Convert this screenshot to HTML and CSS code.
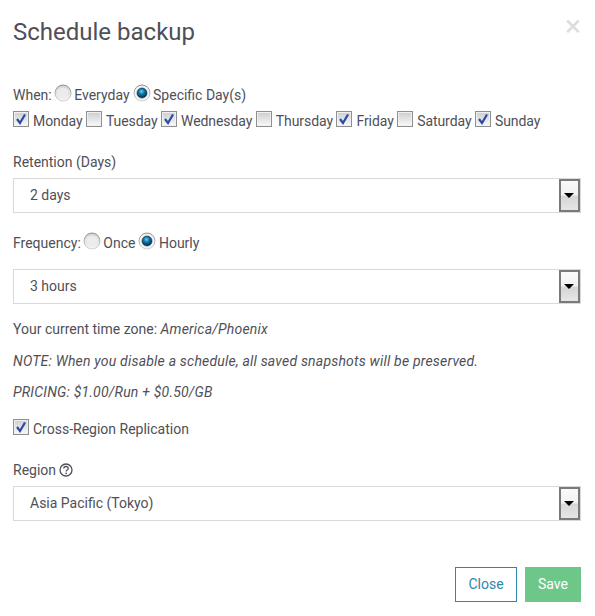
FILE: index.html
```html
<!DOCTYPE html>
<html lang="en">
<head>
    <meta charset="UTF-8">
    <title>Schedule backup</title>
    <link rel="stylesheet" href="styles.css">
</head>
<body>
    <svg class="defs" width="0" height="0">
        <defs>
            <radialGradient id="dot" cx="45%" cy="35%" r="60%">
                <stop offset="0" stop-color="#6fd0f0"/>
                <stop offset="0.45" stop-color="#0f78ad"/>
                <stop offset="1" stop-color="#06324f"/>
            </radialGradient>
            <linearGradient id="ring" x1="0" y1="0" x2="0" y2="1">
                <stop offset="0" stop-color="#8f8f8f"/>
                <stop offset="1" stop-color="#d4d4d4"/>
            </linearGradient>
            <linearGradient id="well" x1="0" y1="0" x2="0" y2="1">
                <stop offset="0" stop-color="#d0d0d0"/>
                <stop offset="1" stop-color="#f6f6f6"/>
            </linearGradient>
            <symbol id="radio-off" viewBox="0 0 18 18">
                <circle cx="9" cy="9" r="8" fill="url(#well)" stroke="url(#ring)"/>
                <circle cx="9" cy="9" r="5.5" fill="#ececec"/>
            </symbol>
            <symbol id="radio-on" viewBox="0 0 18 18">
                <circle cx="9" cy="9" r="8" fill="#f2f2f2" stroke="url(#ring)"/>
                <circle cx="9" cy="9" r="5" fill="url(#dot)" stroke="#06324f" stroke-width="0.6"/>
            </symbol>
            <symbol id="check-off" viewBox="0 0 16 16">
                <rect x="0.5" y="0.5" width="15" height="15" fill="#f0f0f0" stroke="#8f8f8f"/>
                <rect x="2" y="2" width="12" height="12" fill="url(#well)"/>
            </symbol>
            <symbol id="check-on" viewBox="0 0 16 16">
                <rect x="0.5" y="0.5" width="15" height="15" fill="#f0f0f0" stroke="#8f8f8f"/>
                <rect x="2" y="2" width="12" height="12" fill="url(#well)"/>
                <path d="M4 8l3 4 5-8.5" fill="none" stroke="#2a4aa5" stroke-width="2.2"/>
            </symbol>
        </defs>
    </svg>

    <div class="modal">
        <div class="modal-header">
            <h2>Schedule backup</h2>
            <span class="close-x">&times;</span>
        </div>

        <div class="row when-row">
            <span>When:</span>
            <svg class="radio"><use href="#radio-off"/></svg><span class="opt">Everyday</span>
            <svg class="radio"><use href="#radio-on"/></svg><span class="opt">Specific Day(s)</span>
        </div>
        <div class="row days-row">
            <svg class="check"><use href="#check-on"/></svg><span class="day">Monday</span>
            <svg class="check"><use href="#check-off"/></svg><span class="day">Tuesday</span>
            <svg class="check"><use href="#check-on"/></svg><span class="day">Wednesday</span>
            <svg class="check"><use href="#check-off"/></svg><span class="day">Thursday</span>
            <svg class="check"><use href="#check-on"/></svg><span class="day">Friday</span>
            <svg class="check"><use href="#check-off"/></svg><span class="day">Saturday</span>
            <svg class="check"><use href="#check-on"/></svg><span class="day">Sunday</span>
        </div>

        <div class="field-label retention">Retention (Days)</div>
        <div class="select-box">
            <span class="select-value">2 days</span>
            <span class="select-arrow"></span>
        </div>

        <div class="row frequency-row">
            <span>Frequency:</span>
            <svg class="radio"><use href="#radio-off"/></svg><span class="opt">Once</span>
            <svg class="radio"><use href="#radio-on"/></svg><span class="opt">Hourly</span>
        </div>
        <div class="select-box">
            <span class="select-value">3 hours</span>
            <span class="select-arrow"></span>
        </div>

        <p class="note tz">Your current time zone: <em>America/Phoenix</em></p>
        <p class="note spaced"><em>NOTE: When you disable a schedule, all saved snapshots will be preserved.</em></p>
        <p class="note"><em>PRICING: $1.00/Run + $0.50/GB</em></p>

        <div class="row cross-row">
            <svg class="check"><use href="#check-on"/></svg><span>Cross-Region Replication</span>
        </div>

        <div class="field-label region">
            Region
            <svg class="help" viewBox="0 0 14 14" width="14" height="14">
                <circle cx="7" cy="7" r="6" fill="none" stroke="#4f4f58" stroke-width="1.3"/>
                <path d="M4.8 5.6c0-2.8 4.5-2.8 4.5-.1 0 1.6-2.2 1.5-2.2 3.1" fill="none" stroke="#4f4f58" stroke-width="1.3"/>
                <circle cx="7.1" cy="10.3" r="0.9" fill="#4f4f58"/>
            </svg>
        </div>
        <div class="select-box">
            <span class="select-value">Asia Pacific (Tokyo)</span>
            <span class="select-arrow"></span>
        </div>

        <div class="modal-footer">
            <button class="btn btn-close">Close</button>
            <button class="btn btn-save">Save</button>
        </div>
    </div>
</body>
</html>
```

FILE: styles.css
```css
html, body {
    margin: 0;
    padding: 0;
    background: #fff;
}

body {
    font-family: Roboto, "Liberation Sans", sans-serif;
    font-size: 14px;
    line-height: 20px;
    color: #4f4f58;
}

.defs {
    position: absolute;
}

.modal {
    width: 568px;
    height: 616px;
    padding: 0 14px 0 13px;
    overflow: hidden;
}

.modal-header {
    display: flex;
    justify-content: space-between;
    padding-top: 16px;
    height: 56px;
}

.modal-header h2 {
    margin: 0;
    font-size: 24px;
    line-height: 32px;
    font-weight: 400;
}

.close-x {
    font-size: 30px;
    line-height: 20px;
    color: #dcdcdc;
}

.row {
    display: flex;
    align-items: center;
}

.when-row {
    margin-top: 13px;
    height: 20px;
}

.days-row {
    margin-top: 6px;
    height: 20px;
}

.radio {
    width: 18px;
    height: 18px;
    margin: -5px 2.5px 0 2px;
    flex: none;
}

.opt {
    margin-right: 1px;
}

.check {
    width: 16px;
    height: 16px;
    margin: -5px 4px 0 0;
    flex: none;
}

.day {
    margin-right: 3.5px;
    letter-spacing: -0.08px;
}

.field-label {
    height: 20px;
}

.retention {
    margin-top: 21px;
    margin-bottom: 6px;
}

.region {
    margin-top: 21px;
    margin-bottom: 6px;
    display: flex;
    align-items: center;
    gap: 3px;
}

.select-box {
    display: flex;
    justify-content: space-between;
    align-items: stretch;
    height: 33px;
    border: 1px solid #d9d9d9;
}

.select-value {
    padding-left: 16px;
    line-height: 33px;
}

.select-arrow {
    position: relative;
    width: 17px;
    border: 2px solid #7a7a7a;
    background: linear-gradient(#fafafa 0%, #f2f2f2 48%, #d6d6d6 52%, #e6e6e6 100%);
}

.select-arrow::after {
    content: "";
    position: absolute;
    left: 3px;
    top: 12px;
    border: 5px solid transparent;
    border-top: 5px solid #000;
    border-bottom: 0;
}

.frequency-row {
    margin-top: 20px;
    margin-bottom: 16px;
    height: 20px;
}

.note {
    margin: 11px 0 0;
    height: 20px;
}

.note em {
    letter-spacing: 0.2px;
}

.tz {
    margin-top: 15px;
}

.spaced {
    margin-top: 12px;
}

.cross-row {
    margin-top: 17px;
    height: 20px;
}

.modal-footer {
    display: flex;
    justify-content: flex-end;
    gap: 8px;
    margin-top: 46px;
}

.btn {
    height: 35px;
    font-family: inherit;
    font-size: 14px;
    border-radius: 0;
    padding: 0 0 2px;
}

.btn-close {
    width: 62px;
    background: #fff;
    color: #2f87ad;
    border: 1px solid #2f87ad;
}

.btn-save {
    width: 56px;
    background: #6cc788;
    color: #fff;
    border: 1px solid #6cc788;
}
```
